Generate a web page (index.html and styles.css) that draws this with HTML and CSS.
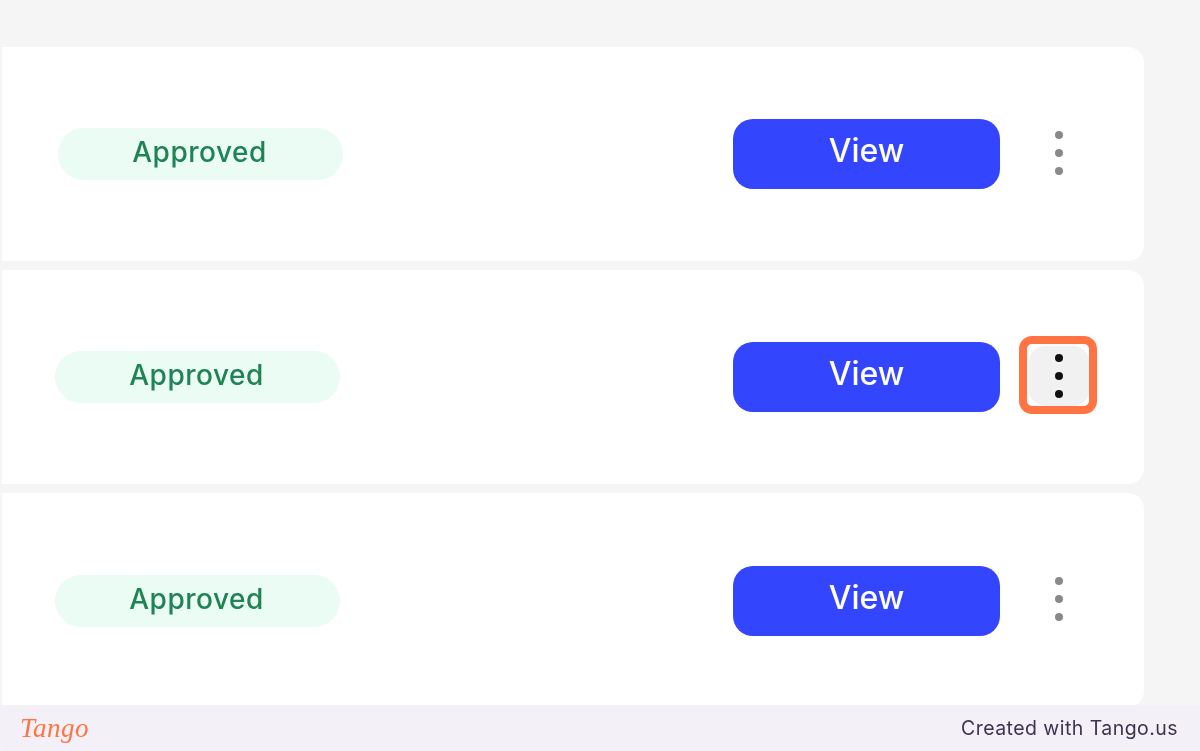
FILE: index.html
```html
<!DOCTYPE html>
<html lang="en">
<head>
    <meta charset="UTF-8">
    <title>Approvals</title>
    <link rel="stylesheet" href="styles.css">
</head>
<body>
    <main class="lista">
        <div class="card">
            <span class="status status-first">Approved</span>
            <button class="view">View</button>
            <div class="more">
                <span class="dot"></span><span class="dot"></span><span class="dot"></span>
            </div>
        </div>

        <div class="card">
            <span class="status">Approved</span>
            <button class="view">View</button>
            <div class="more more-active">
                <span class="dot"></span><span class="dot"></span><span class="dot"></span>
                <div class="highlight"></div>
            </div>
        </div>

        <div class="card card-last">
            <span class="status">Approved</span>
            <button class="view">View</button>
            <div class="more">
                <span class="dot"></span><span class="dot"></span><span class="dot"></span>
            </div>
        </div>
    </main>

    <footer class="rodape">
        <span class="logo">Tango</span>
        <span class="credit">Created with Tango.us</span>
    </footer>
</body>
</html>
```

FILE: styles.css
```css
* {
    box-sizing: border-box;
}
html, body {
    height: 100%;
}
body {
    margin: 0;
    display: flex;
    flex-direction: column;
    height: 751px;
    overflow: hidden;
    background-color: #f5f5f6;
    font-family: "Inter", "Lato", sans-serif;
}
.lista {
    flex: 1;
    min-height: 0;
    overflow: hidden;
    display: flex;
    flex-direction: column;
    gap: 9px;
    width: 1144px;
    padding: 47px 0 0 2px;
}
.card {
    flex: none;
    display: flex;
    align-items: center;
    height: 214px;
    padding: 0 55px 0 53px;
    background-color: #fff;
    border-radius: 0 16px 16px 0;
}
.card-last {
    padding-top: 1px;
}
.status {
    width: 285px;
    height: 52px;
    padding-right: 2px;
    line-height: 49px;
    margin-right: auto;
    text-align: center;
    font-size: 28px;
    font-weight: 500;
    letter-spacing: 0.5px;
    color: #1f8354;
    background-color: #eafcf3;
    border-radius: 26px;
    filter: blur(0.4px);
}
.status-first {
    margin-left: 3px;
}
.view {
    width: 267px;
    height: 70px;
    padding: 0 0 7px;
    border: none;
    border-radius: 20px;
    background-color: #3445fe;
    color: #fff;
    font-family: inherit;
    font-size: 32px;
    font-weight: 500;
    cursor: pointer;
    filter: blur(0.4px);
}
.more {
    position: relative;
    display: flex;
    flex-direction: column;
    align-items: center;
    justify-content: center;
    gap: 10px;
    width: 60px;
    height: 60px;
    margin: -3px 0 0 29px;
}
.dot {
    width: 8px;
    height: 8px;
    border-radius: 50%;
    background-color: #8a8a8a;
    filter: blur(0.5px);
}
.more-active {
    background-color: #f1f1f1;
    border-radius: 16px;
}
.more-active .dot {
    background-color: #111;
}
.highlight {
    position: absolute;
    top: -10px;
    left: -10px;
    width: 78px;
    height: 78px;
    border: 8px solid #ff7442;
    border-radius: 13px;
}
.rodape {
    flex: none;
    display: flex;
    align-items: center;
    justify-content: space-between;
    height: 46px;
    padding: 0 22px 0 20px;
    background-color: #f3f1f7;
    border-bottom-left-radius: 8px;
}
.logo {
    font-family: "Liberation Serif", serif;
    font-style: italic;
    font-size: 27px;
    letter-spacing: 0.5px;
    color: #ff7442;
    filter: blur(0.3px);
}
.credit {
    font-size: 19.5px;
    letter-spacing: 0.45px;
    color: #3f3350;
    filter: blur(0.3px);
}
```
